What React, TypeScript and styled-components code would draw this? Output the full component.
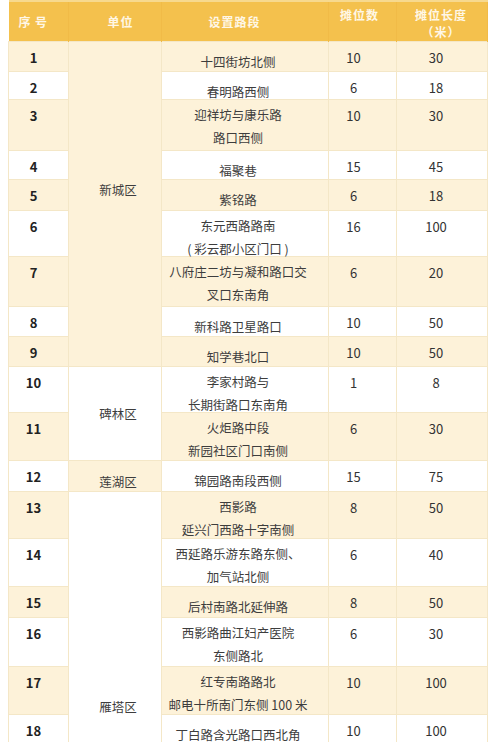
import React from "react";
import styled, { createGlobalStyle } from "styled-components";

const GlobalStyle = createGlobalStyle`
  html, body {
    margin: 0;
    padding: 0;
    height: 742px;
    overflow: hidden;
    background: #ffffff;
  }
  body {
    font-family: "Noto Sans CJK SC", "Noto Sans", sans-serif;
  }
`;

const Page = styled.div`
  padding: 0 13px 0 8px;
`;

const Table = styled.table`
  width: 479px;
  table-layout: fixed;
  border-collapse: collapse;
  border-top: 2px solid #f7d98e;
`;

const HeadRow = styled.tr`
  height: 40px;
  background: #f4c14d;
`;

const HeadCell = styled.th<{ $pl?: number; $pr?: number; $pt?: number }>`
  vertical-align: top;
  padding: ${(p) => p.$pt ?? 11}px ${(p) => p.$pr ?? 0}px 0 ${(p) => p.$pl ?? 0}px;
  border-right: 1px solid #f1bb47;
  color: #fff7e6;
  font-size: 12px;
  font-weight: 700;
  letter-spacing: 1px;
  line-height: 17px;
  text-align: center;
  white-space: pre;
`;

const Row = styled.tr<{ $h: number; $odd: boolean }>`
  height: ${(p) => p.$h}px;
  background: ${(p) => (p.$odd ? "#fdf2d9" : "#ffffff")};
`;

const Cell = styled.td`
  vertical-align: top;
  border: 1px solid #f4e7c7;
  text-align: center;
  padding: 0;
`;

const NoCell = styled(Cell)`
  padding: 7.5px 10px 0 0;
  color: #222222;
  font-size: 13px;
  font-weight: 700;
  line-height: 18px;
`;

const DistrictCell = styled(Cell)<{ $pt: number; $odd: boolean }>`
  padding: ${(p) => p.$pt}px 0 0 6px;
  background: ${(p) => (p.$odd ? "#fdf2d9" : "#ffffff")};
  color: #3d3d3d;
  font-size: 12.5px;
  line-height: 18px;
`;

const RoadCell = styled(Cell)<{ $lines: number }>`
  padding: ${(p) => (p.$lines === 1 ? 8.5 : 3.5)}px 18px 0 4px;
  color: #3d3d3d;
  font-size: 12.5px;
  line-height: 23px;
  white-space: nowrap;
`;

// lines sit lower than the row's box allows; let them hang over the bottom
const RoadText = styled.div`
  margin-bottom: -16px;
`;

const NumCell = styled(Cell)<{ $pr: number }>`
  padding: 7.5px ${(p) => p.$pr}px 0 0;
  color: #333333;
  font-size: 13px;
  line-height: 18px;
`;

type Stall = { no: number; road: string[]; count: number; len: number; h: number };

const stalls: Stall[] = [
  { no: 1, road: ["十四街坊北侧"], count: 10, len: 30, h: 30 },
  { no: 2, road: ["春明路西侧"], count: 6, len: 18, h: 28 },
  { no: 3, road: ["迎祥坊与康乐路", "路口西侧"], count: 10, len: 30, h: 51 },
  { no: 4, road: ["福聚巷"], count: 15, len: 45, h: 29 },
  { no: 5, road: ["紫铭路"], count: 6, len: 18, h: 31 },
  { no: 6, road: ["东元西路路南", "( 彩云郡小区门口 )"], count: 16, len: 100, h: 46 },
  { no: 7, road: ["八府庄二坊与凝和路口交", "叉口东南角"], count: 6, len: 20, h: 50 },
  { no: 8, road: ["新科路卫星路口"], count: 10, len: 50, h: 30 },
  { no: 9, road: ["知学巷北口"], count: 10, len: 50, h: 30 },
  { no: 10, road: ["李家村路与", "长期街路口东南角"], count: 1, len: 8, h: 46 },
  { no: 11, road: ["火炬路中段", "新园社区门口南侧"], count: 6, len: 30, h: 48 },
  { no: 12, road: ["锦园路南段西侧"], count: 15, len: 75, h: 31 },
  { no: 13, road: ["西影路", "延兴门西路十字南侧"], count: 8, len: 50, h: 47 },
  { no: 14, road: ["西延路乐游东路东侧、", "加气站北侧"], count: 6, len: 40, h: 48 },
  { no: 15, road: ["后村南路北延伸路"], count: 8, len: 50, h: 31 },
  { no: 16, road: ["西影路曲江妇产医院", "东侧路北"], count: 6, len: 30, h: 49 },
  { no: 17, road: ["红专南路路北", "邮电十所南门东侧 100 米"], count: 10, len: 100, h: 48 },
  { no: 18, road: ["丁白路含光路口西北角"], count: 10, len: 100, h: 45 },
];

// district cell starts at this row and spans `span` rows
const districts: Record<number, { name: string; span: number; pt: number; odd: boolean }> = {
  1: { name: "新城区", span: 9, pt: 139, odd: true },
  10: { name: "碑林区", span: 2, pt: 38, odd: false },
  12: { name: "莲湖区", span: 1, pt: 12, odd: true },
  13: { name: "雁塔区", span: 6, pt: 206, odd: false },
};

export default function App() {
  return (
    <Page>
      <GlobalStyle />
      <Table>
        <colgroup>
          <col style={{ width: 60 }} />
          <col style={{ width: 93 }} />
          <col style={{ width: 167 }} />
          <col style={{ width: 68 }} />
          <col style={{ width: 91 }} />
        </colgroup>
        <thead>
          <HeadRow>
            <HeadCell $pr={10}>序 号</HeadCell>
            <HeadCell $pl={11}>单位</HeadCell>
            <HeadCell $pr={21}>设置路段</HeadCell>
            <HeadCell $pr={6} $pt={4}>摊位数</HeadCell>
            <HeadCell $pr={2} $pt={4}>
              {"摊位长度\n（米）"}
            </HeadCell>
          </HeadRow>
        </thead>
        <tbody>
          {stalls.map((s) => {
            const d = districts[s.no];
            return (
              <Row key={s.no} $h={s.h} $odd={s.no % 2 === 1}>
                <NoCell>{s.no}</NoCell>
                {d && (
                  <DistrictCell rowSpan={d.span} $pt={d.pt} $odd={d.odd}>
                    {d.name}
                  </DistrictCell>
                )}
                <RoadCell $lines={s.road.length}>
                  <RoadText>
                    {s.road.map((line) => (
                      <div key={line}>{line}</div>
                    ))}
                  </RoadText>
                </RoadCell>
                <NumCell $pr={18}>{s.count}</NumCell>
                <NumCell $pr={12}>{s.len}</NumCell>
              </Row>
            );
          })}
        </tbody>
      </Table>
    </Page>
  );
}
